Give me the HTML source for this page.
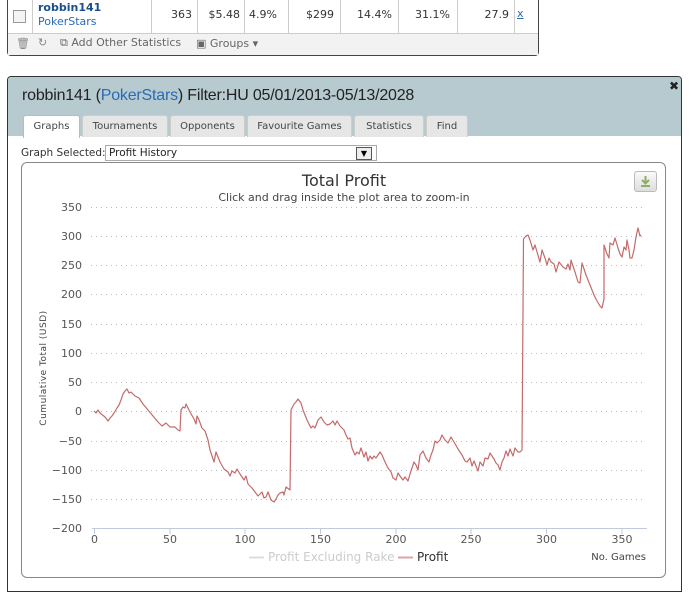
<!DOCTYPE html>
<html><head><style>
body{margin:0;width:691px;height:593px;background:#fff;font-family:"DejaVu Sans","Liberation Sans",sans-serif;position:relative;overflow:hidden}
.abs{position:absolute}
.top{left:7px;top:-2px;width:530px;height:57px;border:1px solid #444;border-top:none;border-radius:0 0 4px 4px;background:#fff}
.tab{position:absolute;top:115px;height:21px;background:#e6e6e6;border:1px solid #ccc;border-bottom:none;border-radius:3px 3px 0 0;font-size:10px;color:#444;text-align:center;line-height:21px}
</style></head><body>
<div class="abs top">
 <div class="abs" style="left:0;top:0;width:530px;height:35px;border-bottom:1px solid #ccc"></div>
 <div class="abs" style="left:5px;top:12px;width:11px;height:11px;border:1px solid #999;background:#f4f4f4"></div>
 <div class="abs" style="left:24px;top:0;width:1px;height:35px;background:#ccc"></div>
 <div class="abs" style="left:30px;top:3px;font-size:11px;font-weight:bold;color:#1a4f8a">robbin141</div>
 <div class="abs" style="left:30px;top:17px;font-size:11px;color:#2a6bb5">PokerStars</div>
 <div class="abs" style="left:143px;top:0;width:1px;height:35px;background:#ccc"></div>
 <div class="abs" style="left:150px;top:10px;width:34px;text-align:right;font-size:11px;color:#333">363</div>
 <div class="abs" style="left:189px;top:0;width:1px;height:35px;background:#ccc"></div>
 <div class="abs" style="left:192px;top:10px;width:40px;text-align:right;font-size:11px;color:#333">$5.48</div>
 <div class="abs" style="left:236px;top:0;width:1px;height:35px;background:#ccc"></div>
 <div class="abs" style="left:241px;top:10px;font-size:11px;color:#333">4.9%</div>
 <div class="abs" style="left:280px;top:0;width:1px;height:35px;background:#ccc"></div>
 <div class="abs" style="left:280px;top:10px;width:46px;text-align:right;font-size:11px;color:#333">$299</div>
 <div class="abs" style="left:332px;top:0;width:1px;height:35px;background:#ccc"></div>
 <div class="abs" style="left:332px;top:10px;width:52px;text-align:right;font-size:11px;color:#333">14.4%</div>
 <div class="abs" style="left:390px;top:0;width:1px;height:35px;background:#ccc"></div>
 <div class="abs" style="left:390px;top:10px;width:52px;text-align:right;font-size:11px;color:#333">31.1%</div>
 <div class="abs" style="left:449px;top:0;width:1px;height:35px;background:#ccc"></div>
 <div class="abs" style="left:449px;top:10px;width:52px;text-align:right;font-size:11px;color:#333">27.9</div>
 <div class="abs" style="left:506px;top:0;width:1px;height:35px;background:#ccc"></div>
 <div class="abs" style="left:509px;top:9px;font-size:11px;color:#2a6bb5;text-decoration:underline">x</div>
 <div class="abs" style="left:0;top:36px;width:530px;height:21px;background:#f2f2f2"></div>
 <div class="abs" style="left:8px;top:39px;font-size:11px;color:#888">&#x1F5D1;</div>
 <div class="abs" style="left:30px;top:38px;font-size:11px;color:#888">&#x21BB;</div>
 <div class="abs" style="left:52px;top:38px;font-size:11px;color:#666">⧉ Add Other Statistics</div>
 <div class="abs" style="left:188px;top:39px;font-size:11px;color:#666">▣ Groups ▾</div>
</div>

<div class="abs" style="left:7px;top:76px;width:673px;height:514px;border:1px solid #333;border-radius:4px 4px 0 0;background:#fff"></div>
<div class="abs" style="left:8px;top:77px;width:673px;height:59px;background:#b6cad0;border-radius:3px 3px 0 0"></div>
<div class="abs" style="left:669px;top:79px;font-size:12px;font-weight:bold;color:#222">✖</div>
<div class="abs" style="left:22px;top:87px;font-family:'Liberation Sans',sans-serif;font-size:16px;color:#222;letter-spacing:-0.2px">robbin141 (<span style="color:#2a6bb5">PokerStars</span>) Filter:HU 05/01/2013-05/13/2028</div>
<div class="tab" style="left:23px;width:55px;background:#fff;border-color:#bbb;height:22px">Graphs</div>
<div class="tab" style="left:82px;width:84px">Tournaments</div>
<div class="tab" style="left:170px;width:73px">Opponents</div>
<div class="tab" style="left:247px;width:103px">Favourite Games</div>
<div class="tab" style="left:354px;width:68px">Statistics</div>
<div class="tab" style="left:426px;width:40px">Find</div>

<div class="abs" style="left:21px;top:147px;font-size:10.5px;color:#333">Graph Selected:</div>
<div class="abs" style="left:105px;top:145px;width:267px;height:14px;border:1px solid #aaa;font-size:10.5px;color:#222;line-height:14px;padding-left:3px">Profit History</div>
<div class="abs" style="left:356px;top:147px;width:14px;height:11px;border:1px solid #555;background:#eee;font-size:8px;text-align:center;line-height:11px">▼</div>

<div class="abs" style="left:21px;top:162px;width:643px;height:414px;border:1px solid #888;border-radius:6px"></div>
<div class="abs" style="left:634px;top:171px;width:21px;height:19px;border:1px solid #bbb;border-radius:3px;background:linear-gradient(#fafafa,#ddd)"></div>
<svg class="abs" style="left:634px;top:171px" width="23" height="21"><path d="M11.5 5v7M8 9l3.5 3.5L15 9M7 15h9" stroke="#8bb060" stroke-width="2" fill="none"/></svg>

<svg class="abs" style="left:0;top:0" width="691" height="593" font-family="DejaVu Sans, sans-serif">
<text x="344" y="186" text-anchor="middle" font-size="16" fill="#333">Total Profit</text>
<text x="344" y="201" text-anchor="middle" font-size="11" fill="#444">Click and drag inside the plot area to zoom-in</text>
<g stroke="#bbb" stroke-dasharray="1,4" stroke-width="1">
<line x1="91" x2="646" y1="207.5" y2="207.5"/><line x1="91" x2="646" y1="236.5" y2="236.5"/><line x1="91" x2="646" y1="265.5" y2="265.5"/><line x1="91" x2="646" y1="294.5" y2="294.5"/><line x1="91" x2="646" y1="324.5" y2="324.5"/><line x1="91" x2="646" y1="353.5" y2="353.5"/><line x1="91" x2="646" y1="382.5" y2="382.5"/><line x1="91" x2="646" y1="411.5" y2="411.5"/><line x1="91" x2="646" y1="441.5" y2="441.5"/><line x1="91" x2="646" y1="470.5" y2="470.5"/><line x1="91" x2="646" y1="499.5" y2="499.5"/>
</g>
<line x1="92" x2="647" y1="528.5" y2="528.5" stroke="#c0cad8"/>
<g stroke="#c0cad8"><line x1="94.5" x2="94.5" y1="529" y2="534"/><line x1="170" x2="170" y1="529" y2="534"/><line x1="245" x2="245" y1="529" y2="534"/><line x1="320.5" x2="320.5" y1="529" y2="534"/><line x1="396" x2="396" y1="529" y2="534"/><line x1="471" x2="471" y1="529" y2="534"/><line x1="546.5" x2="546.5" y1="529" y2="534"/><line x1="622" x2="622" y1="529" y2="534"/></g>
<g font-size="11" fill="#555" text-anchor="end">
<text x="82" y="211">350</text><text x="82" y="240">300</text><text x="82" y="269">250</text><text x="82" y="298">200</text><text x="82" y="328">150</text><text x="82" y="357">100</text><text x="82" y="386">50</text><text x="82" y="415">0</text><text x="82" y="445">−50</text><text x="82" y="474">−100</text><text x="82" y="503">−150</text><text x="82" y="532">−200</text>
</g>
<g font-size="11" fill="#555" text-anchor="middle">
<text x="94.5" y="543">0</text><text x="170" y="543">50</text><text x="245" y="543">100</text><text x="320.5" y="543">150</text><text x="396" y="543">200</text><text x="471" y="543">250</text><text x="546.5" y="543">300</text><text x="622" y="543">350</text>
</g>
<text x="646" y="560" text-anchor="end" font-size="10" fill="#444">No. Games</text>
<text transform="translate(46,368) rotate(-90)" text-anchor="middle" font-size="9" fill="#444" letter-spacing="0.5">Cumulative Total (USD)</text>
<line x1="249" x2="264" y1="557.5" y2="557.5" stroke="#ddd" stroke-width="2"/>
<text x="268" y="561" font-size="12" fill="#ccc">Profit Excluding Rake</text>
<line x1="398" x2="413" y1="557.5" y2="557.5" stroke="#d9a5a5" stroke-width="2"/>
<text x="417" y="561" font-size="12" fill="#333">Profit</text>
<polyline fill="none" stroke="#c46a6a" stroke-width="1.2" stroke-linejoin="round" points="94,411 96,413 98,410 100,413 105,417 108,421 110,418 112,416 114,413 117,408 119,405 121,400 123,394 125,391 127,389 129,393 131,392 135,396 139,398 143,404 148,410 153,416 158,422 162,426 166,423 170,427 175,427 178,430 180,431 181,410 183,407 185,408 186,404 190,412 194,419 196,424 197,416 199,420 202,428 205,431 208,440 210,450 214,462 216,452 220,462 224,469 228,472 230,476 232,471 235,473 237,469 240,474 244,480 246,476 248,484 252,488 255,492 258,496 260,494 262,492 264,498 266,497 268,492 271,500 274,502 276,499 278,495 280,493 283,492 284,495 286,487 290,490 291,410 294,404 296,402 298,399 301,403 303,410 307,420 311,428 313,426 315,428 318,420 321,417 324,422 327,425 330,424 333,421 335,425 337,421 340,426 344,430 346,435 348,439 350,438 352,448 355,455 357,452 359,454 361,448 364,457 366,452 368,461 370,456 372,459 374,456 376,458 380,452 382,455 385,462 388,468 391,472 393,478 396,480 398,473 400,476 403,480 405,477 408,481 410,474 412,468 414,462 416,465 418,470 420,455 423,451 426,458 429,462 431,455 433,450 435,441 437,443 440,440 442,435 445,440 448,443 451,437 454,442 458,449 462,455 465,461 467,462 470,458 472,466 474,461 476,466 478,471 480,462 483,466 485,458 488,459 490,453 494,459 496,463 498,465 500,470 502,462 504,458 506,451 508,456 510,449 513,456 515,448 518,452 520,452 522,450 523.5,239 526,236 528,235 530,240 533,250 535,245 537,252 540,262 542,250 545,258 547,265 549,258 551,262 554,264 556,272 559,262 563,267 566,269 568,264 570,270 571,260 575,272 578,282 580,283 582,263 586,275 590,285 594,295 597,301 600,306 602,308 604,299 604,245 607,254 609,258 610,243 613,245 615,238 618,248 620,254 622,257 624,247 626,250 627,240 629,250 630,258 632,258 634,250 636,237 638,228 640,236 641,235"/>
</svg>
</body></html>
